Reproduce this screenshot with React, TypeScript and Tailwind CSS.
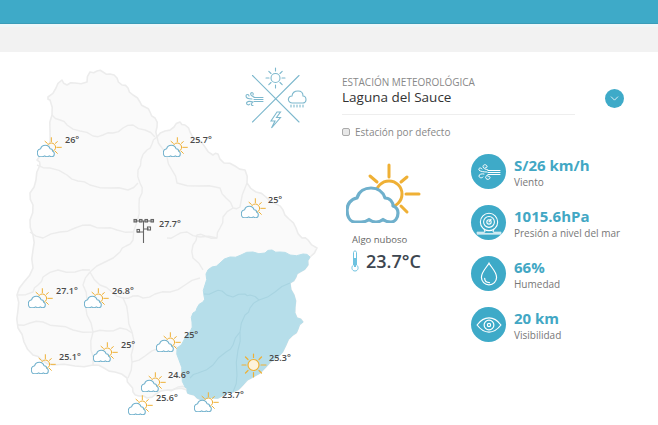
import React from "react";
import { ChevronDown } from "lucide-react";

const outline =
  "90,72 97,71 103,72 110,74 117,78 122,85 128,88 133,95 140,102 145,107 150,112 155,118 157,127 157,137 165,131 174,127 180,122 185,125 190,132 197,140 205,147 213,155 218,154 224,163 235,166 245,170 247,183 256,192 266,197 276,204 283,210 289,219 296,228 302,238 308,240 317,248 310,257 308,265 300,272 296,277 290,283 294,295 295,307 297,318 303,322 298,329 293,335 286,345 277,358 266,367 253,377 243,385 233,392 222,396 213,398 205,399 197,398 190,394 187,390 175,389 167,390 156,394 147,398 139,396 133,392 130,385 127,378 115,372 104,368 93,365 75,366 53,365 42,360 33,355 24,342 18,328 18,310 17,295 24,282 33,268 33,250 33,235 30,220 33,205 30,193 36,180 40,165 37,160 48,150 50,130 52,115 50,100 48,97 56,88 62,80 67,85 75,83 87,82";

const blue =
  "310,257 303,254 290,255 280,252 272,250 265,253 253,252 241,255 230,257 220,263 212,267 206,274 205,285 204,296 203,302 197,308 193,313 192,322 190,332 184,340 177,348 179,360 182,375 185,387 187,391 190,394 197,398 205,399 213,398 222,396 233,392 243,385 253,377 266,367 277,358 286,345 293,335 298,329 303,322 297,318 295,307 294,295 290,283 296,277 300,272 308,265";

const grayLines = [
  "52,115 60,120 67,125 80,131 93,136 103,135 113,133 123,128 133,125 145,130 155,137",
  "157,137 152,144 147,150 141,160 138,170 140,183 142,193 139,205 137,222 133,240 126,246 120,252 105,262 90,272",
  "37,165 50,168 67,175 78,181 90,185 110,188 128,190 138,183",
  "157,137 162,148 167,157 172,170 177,183 198,186 220,188 226,198 233,208 240,207 247,183",
  "233,208 223,217 220,228 217,238 205,236 197,235 193,245 193,258 203,270",
  "30,232 43,238 60,232 75,228 90,225 104,228 117,230 133,232",
  "167,238 175,236 187,232 200,237 217,238",
  "90,270 75,272 58,270 43,277 38,285 33,292 18,295",
  "90,272 83,285 87,300 87,315 93,332 91,350 93,365",
  "18,325 30,323 43,322 58,326 73,330 93,332 107,331 120,328 132,333",
  "90,272 100,285 112,292 123,298 128,315 132,332 133,348 132,362 128,378",
  "123,298 133,296 143,298 155,294 170,292 185,285 200,278",
  "132,362 145,356 160,348 170,347 177,347",
  "167,390 178,387 187,388",
];

const blueLines = [
  "204,294 214,292 222,291 233,297 245,294 250,295 259,300 275,292 290,283",
  "259,300 250,308 245,315 240,332 238,350 237,375 233,392",
  "240,332 233,345 226,352 213,365 198,373 190,378",
];

// las fronteras del mapa no son rectas: mete un punto corrido en cada tramo
function wobble(points: string, closed = false) {
  const pts = points.split(" ").map((p) => p.split(",").map(Number));
  const out: string[] = [];
  pts.forEach((p, i) => {
    out.push(p.join(","));
    const next = pts[i + 1] ?? (closed ? pts[0] : null);
    if (!next) return;
    const dx = next[0] - p[0];
    const dy = next[1] - p[1];
    const len = Math.hypot(dx, dy) || 1;
    const k = i % 2 === 0 ? 1.2 : -1.2;
    out.push(`${(p[0] + dx / 2 - (dy / len) * k).toFixed(1)},${(p[1] + dy / 2 + (dx / len) * k).toFixed(1)}`);
  });
  return out.join(" ");
}

function CloudSun() {
  return (
    <svg viewBox="0 0 75 60" className="block w-full h-full" fill="none" strokeLinecap="round">
      <g stroke="#efb035" strokeWidth="3">
        <circle cx="43" cy="31" r="13" />
        <path d="M43 2V14M60 31H73M24 13L31 19M61 14L55 19M55 43L61 49" />
      </g>
      <path
        d="M9 59C3 59 1 52 1 47C1 41 5 36 11 35C13 28 19 25 25 25C32 25 37 29 39 35C44 35 47 39 47 43C50 44 52 47 52 50C52 55 49 59 45 59C42 59 39 58 37 56.500C35 58 32 59 30 59C27 59 25 58 23 56.500C21 58 18 59 15 59Z"
        fill="#fff"
        stroke="#6fb0cc"
        strokeWidth="3.2"
        strokeLinejoin="round"
      />
    </svg>
  );
}

const markers = [
  { x: 37, y: 137, lx: 65, ly: 140, t: "26°" },
  { x: 163, y: 137, lx: 190, ly: 140, t: "25.7°" },
  { x: 241, y: 198, lx: 268, ly: 200, t: "25°" },
  { x: 28, y: 288, lx: 56, ly: 291, t: "27.1°" },
  { x: 84, y: 288, lx: 112, ly: 291, t: "26.8°" },
  { x: 31, y: 354, lx: 59, ly: 357, t: "25.1°" },
  { x: 93, y: 342, lx: 121, ly: 345, t: "25°" },
  { x: 156, y: 332, lx: 184, ly: 335, t: "25°" },
  { x: 141, y: 372, lx: 168, ly: 375, t: "24.6°" },
  { x: 128, y: 395, lx: 156, ly: 398, t: "25.6°" },
  { x: 194, y: 392, lx: 222, ly: 395, t: "23.7°" },
];

const TOP = 52;

function Label({ x, y, t }: { x: number; y: number; t: string }) {
  return (
    <span
      className="absolute text-[9px] leading-[12px] font-semibold text-[#4a4a4a]"
      style={{ left: x, top: y - TOP - 6 }}
    >
      {t}
    </span>
  );
}

function MapCanvas() {
  return (
    <div className="relative w-[330px] h-[373px] shrink-0">
      <svg viewBox="0 52 330 373" className="absolute inset-0 w-full h-full" fill="none">
        <polygon points={wobble(outline, true)} fill="#fafafa" stroke="#ececec" strokeWidth="1.6" strokeLinejoin="round" />
        {grayLines.map((p) => (
          <polyline key={p} points={wobble(p)} stroke="#ececec" strokeWidth="1.4" strokeLinejoin="round" />
        ))}
        <polygon points={wobble(blue, true)} fill="#b6deea" stroke="#b6deea" strokeWidth="1" />
        {blueLines.map((p) => (
          <polyline key={p} points={wobble(p)} stroke="#a8d4e1" strokeWidth="1.1" strokeLinejoin="round" />
        ))}

        {/* sol de Laguna del Sauce */}
        <g stroke="#efb035" strokeWidth="1.2" strokeLinecap="round">
          <circle cx="253.5" cy="365" r="5.5" fill="#fdf3dc" />
          <path d="M253.5 354V357.500M253.500 372.500V377M242 365H246M261 365H266M245.500 357L248 359.500M259 370.500L261.500 373M261.500 357L259 359.500M248 370.500L245.500 373" />
        </g>

        {/* estacion central */}
        <g stroke="#666" strokeWidth="1.1">
          <path d="M143.5 221V243M134 221H154M137 232H143.5M143.5 229H149" />
          <rect x="134" y="219.5" width="2.5" height="2.5" />
          <rect x="139.5" y="219.5" width="2.5" height="2.5" />
          <rect x="145" y="219.5" width="2.5" height="2.5" />
          <rect x="151" y="219.5" width="2.5" height="2.5" />
          <rect x="137" y="229.5" width="2.5" height="2.5" />
          <rect x="147.5" y="227" width="3" height="3" />
        </g>

        {/* emblema */}
        <g stroke="#7db8cd" strokeWidth="1.1" strokeLinecap="round">
          <path d="M252.500 75.500L299 122M299 75.500L252.500 122" />
          <circle cx="275.500" cy="78" r="4.500" />
          <path d="M275.500 68V71M275.500 85V88M266 78H269M282 78H285M268.800 71.300L271 73.500M280 82.500L282.200 84.700M282.200 71.300L280 73.500M271 82.500L268.800 84.700" />
          <path d="M254 97.500H263M254 99.500H263M254 101.500H263" strokeWidth="1" />
          <path d="M254 97C251 96 250 94 251 93C252 92 254 93 253 95M252 99C249 99 246 98 246 96C246 94 249 94 249 96" />
          <path d="M253 102C250 101 247 101 246.500 103C246.500 105 249 105.500 250 104M253 102C251 103 251 106 253 105.500" />
          <path
            d="M292 103C289 103 288 100 288.500 98.500C289 96.500 291 96 292 96C292.500 92 296 91 298 91C301 91 303 93 303 96C305 96 306 98 306 100C306 102 304 103 303 103Z"
            fill="#fff"
          />
          <path d="M291 105V107M294 105V107M297 105V107M300 105V107M303 105V107" />
          <path d="M277 112L271 121H275L271.500 128L280.500 117.500H276.500L280.500 112Z" fill="#fff" />
        </g>
      </svg>

      {markers.map((m) => (
        <div key={m.x} className="absolute w-[25px] h-[20px]" style={{ left: m.x, top: m.y - TOP }}>
          <CloudSun />
        </div>
      ))}
      {markers.map((m) => (
        <Label key={m.lx + m.t} x={m.lx} y={m.ly} t={m.t} />
      ))}
      <Label x={159} y={224} t="27.7°" />
      <Label x={269} y={358} t="25.3°" />
    </div>
  );
}

function WindIcon() {
  return (
    <svg viewBox="0 0 24 24" className="w-[24px] h-[24px]" fill="none" stroke="#fff" strokeWidth="1" strokeLinecap="round">
      <path d="M11 10.500H23M11 12.500H23M11 14.500H23" />
      <path d="M11 10C9 9 6 9 6 6.500C6 4.500 9 4 10 6C10.500 7.500 9 8.500 8 7.500" />
      <path d="M10 12C7 12 3 11.500 2 10C1 8 4 7 5 9" />
      <path d="M11 15C9 15.500 8 17 9 18.500C10 20 13 19.500 13 17.500C13 16.500 12 16 11 16.500" />
      <path d="M7 14C5 13.500 2 14 2 16C2 18 5 18.500 6 17" />
    </svg>
  );
}

function PressureIcon() {
  return (
    <svg viewBox="0 0 24 24" className="w-[26px] h-[26px]" fill="none" stroke="#fff" strokeWidth="1" strokeLinecap="round">
      <circle cx="12" cy="11" r="8" />
      <circle cx="12" cy="11" r="5" />
      <circle cx="12" cy="11" r="2" />
      <path d="M12 11L14 8.500" />
      <path d="M1 20.500H7.500C8.500 20.500 8.500 19 7.500 18M23 20.500H16.500C15.500 20.500 15.500 19 16.500 18M1 22H23" />
    </svg>
  );
}

function DropIcon() {
  return (
    <svg viewBox="0 0 24 24" className="w-[26px] h-[26px]" fill="none" stroke="#fff" strokeWidth="1.1" strokeLinecap="round">
      <path d="M12 2C13.500 5 19 10 19 15C19 19 16 22 12 22C8 22 5 19 5 15C5 10 10.500 5 12 2Z" />
      <path d="M8 16C8 18.500 10 20 12.500 20" />
    </svg>
  );
}

function EyeIcon() {
  return (
    <svg viewBox="0 0 24 24" className="w-[26px] h-[26px]" fill="none" stroke="#fff" strokeWidth="1.1">
      <path d="M1 12C4 8 8 5.500 12 5.500C16 5.500 20 8 23 12C20 16 16 18.500 12 18.500C8 18.500 4 16 1 12Z" />
      <circle cx="12" cy="12" r="4.500" />
      <circle cx="12" cy="12" r="1.500" />
    </svg>
  );
}

const stats = [
  { icon: <WindIcon />, value: "S/26 km/h", label: "Viento" },
  { icon: <PressureIcon />, value: "1015.6hPa", label: "Presión a nivel del mar" },
  { icon: <DropIcon />, value: "66%", label: "Humedad" },
  { icon: <EyeIcon />, value: "20 km", label: "Visibilidad" },
];

export default function App() {
  return (
    <div className="w-[658px] h-[425px] overflow-hidden bg-white font-['Open_Sans',sans-serif]">
      <div className="h-[24px] bg-[#3eaac8] border-b border-[#3a9cb8]" />
      <div className="h-[28px] bg-[#f2f2f2] border-t-[3px] border-[#eef7f9]" />
      <div className="flex">
        <MapCanvas />
        <div className="pl-3 pt-[23px] flex-1">
          <div className="flex">
            <div className="w-[233px] h-[40px] border-b border-[#eeeeee]">
              <div className="text-[10px] leading-[14px] text-[#888]">ESTACIÓN METEOROLÓGICA</div>
              <div className="text-[13.5px] leading-[17px] text-[#333]">Laguna del Sauce</div>
            </div>
            <button className="ml-[30px] mt-[14px] w-[19px] h-[19px] rounded-full bg-[#3eaac8] flex items-center justify-center">
              <ChevronDown size={13} color="#fff" strokeWidth={1.5} />
            </button>
          </div>
          <div className="mt-[10px] flex items-center h-[14px] gap-[5px]">
            <span className="w-[8px] h-[8px] rounded-[2px] border border-[#aaa] bg-[#e8e8e8]" />
            <span className="text-[10px] leading-[14px] text-[#888]">Estación por defecto</span>
          </div>
          <div className="mt-[15px] flex">
            <div className="w-[129px] pt-[9px]">
              <div className="ml-[4px] w-[75px] h-[60px]">
                <CloudSun />
              </div>
              <div className="ml-[10px] mt-[10px] text-[9.5px] leading-[14px] text-[#666]">Algo nuboso</div>
              <div className="ml-[9px] mt-[2px] flex items-center gap-[7px]">
                <svg viewBox="0 0 8 22" className="w-[8px] h-[22px]" fill="none" stroke="#6ec3e0" strokeWidth="1">
                  <path d="M2.500 15V2.500C2.500 0.500 5.500 0.500 5.500 2.500V15C8 16.500 7.500 21 4 21C0.500 21 0 16.500 2.500 15Z" />
                  <path d="M4 8V17" strokeWidth="2" />
                </svg>
                <span className="text-[18px] leading-[24px] font-semibold text-[#3d4650]">23.7°C</span>
              </div>
            </div>
            <div className="flex flex-col gap-[16px]">
              {stats.map((s) => (
                <div key={s.label} className="flex items-center gap-[8px]">
                  <div className="w-[35px] h-[35px] rounded-full bg-[#3eaac8] flex items-center justify-center">
                    {s.icon}
                  </div>
                  <div>
                    <div className="text-[15px] leading-[20px] font-bold text-[#42a7c4]">{s.value}</div>
                    <div className="text-[10px] leading-[14px] text-[#777]">{s.label}</div>
                  </div>
                </div>
              ))}
            </div>
          </div>
        </div>
      </div>
    </div>
  );
}
